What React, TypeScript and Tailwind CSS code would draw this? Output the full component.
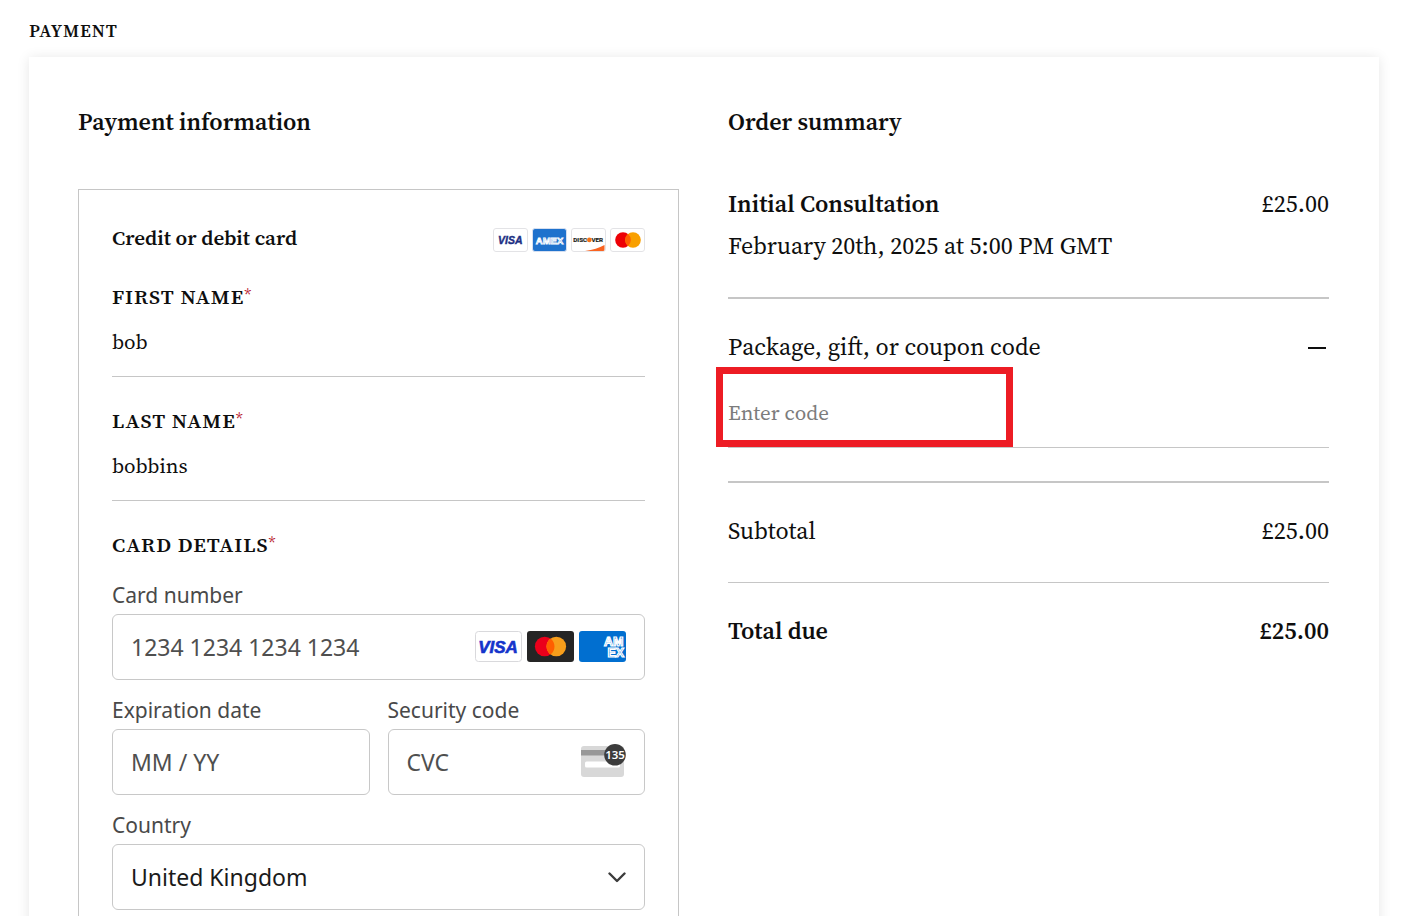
import React, { useState } from "react";

const serif =
  "font-['Source_Serif_4','Source_Serif_Pro','Noto_Serif','Liberation_Serif',serif]";
const sans = "font-['Segoe_UI','Noto_Sans',sans-serif]";

function Visa() {
  return (
    <svg viewBox="0 0 35 24" className="h-6 w-[35px]" role="img" aria-label="Visa">
      <rect x="0.5" y="0.5" width="34" height="23" rx="2.5" fill="#fff" stroke="#e3e3e6" />
      <text x="17.3" y="16" textAnchor="middle" fontFamily="Liberation Sans, sans-serif" fontSize="10.5" fontWeight="700" fontStyle="italic" fill="#1c2f83" stroke="#1c2f83" strokeWidth="0.4">VISA</text>
    </svg>
  );
}

function Amex() {
  return (
    <svg viewBox="0 0 35 24" className="h-6 w-[35px]" role="img" aria-label="American Express">
      <rect x="0.5" y="0.5" width="34" height="23" rx="2.5" fill="#1f72cd" stroke="#d5dff0" />
      <text x="17.5" y="15.5" textAnchor="middle" fontFamily="Liberation Sans, sans-serif" fontSize="9.5" fontWeight="700" fill="#5f9cdf" stroke="#fff" strokeWidth="0.8">AMEX</text>
    </svg>
  );
}

function Discover() {
  return (
    <svg viewBox="0 0 35 24" className="h-6 w-[35px]" role="img" aria-label="Discover">
      <rect x="0.5" y="0.5" width="34" height="23" rx="2.5" fill="#fff" stroke="#e3e3e6" />
      <path d="M14 23C22 22 28 20 33.500 17V21.500Q33.500 23 32 23Z" fill="#f96321" />
      <text x="2.300" y="14" fontFamily="Roboto, sans-serif" fontSize="6.200" fontWeight="700" fill="#231f20" stroke="#231f20" strokeWidth="0.2">DISC</text>
      <circle cx="18.300" cy="11.900" r="2.300" fill="#f47216" />
      <text x="20.500" y="14" fontFamily="Roboto, sans-serif" fontSize="6.200" fontWeight="700" fill="#231f20" stroke="#231f20" strokeWidth="0.2">VER</text>
    </svg>
  );
}

function Mastercard() {
  return (
    <svg viewBox="0 0 35 24" className="h-6 w-[35px]" role="img" aria-label="Mastercard">
      <rect x="0.5" y="0.5" width="34" height="23" rx="2.5" fill="#fff" stroke="#e3e3e6" />
      <circle cx="13" cy="12" r="7.8" fill="#ed0006" />
      <circle cx="23" cy="12" r="7.8" fill="#f9a000" />
      <path d="M18 6a7.800 7.800 0 0 1 0 12a7.800 7.800 0 0 1 0-12Z" fill="#ff5e00" />
    </svg>
  );
}

function FieldBrands() {
  return (
    <div className="pointer-events-none flex shrink-0 gap-1">
      <svg viewBox="0 0 48 32" className="h-8 w-12" role="img" aria-label="Visa">
        <rect x="0.5" y="0.5" width="46" height="30" rx="3" fill="#fff" stroke="#d9d9dc" />
        <text x="23" y="22" textAnchor="middle" fontFamily="Liberation Sans, sans-serif" fontSize="17" fontWeight="700" fontStyle="italic" fill="#1434cb" stroke="#1434cb" strokeWidth="0.6">VISA</text>
      </svg>
      <svg viewBox="0 0 48 32" className="h-8 w-12" role="img" aria-label="Mastercard">
        <rect width="47" height="31" rx="3" fill="#252525" />
        <circle cx="17.700" cy="15.500" r="9.800" fill="#eb001b" />
        <circle cx="29.300" cy="15.500" r="9.800" fill="#f79e1b" />
        <path d="M23.500 7.600a9.800 9.800 0 0 1 0 15.800a9.800 9.800 0 0 1 0-15.800Z" fill="#ff5f00" />
      </svg>
      <svg viewBox="0 0 48 32" className="h-8 w-12" role="img" aria-label="American Express">
        <defs>
          <clipPath id="amexCard">
            <rect width="47" height="31" rx="3" />
          </clipPath>
        </defs>
        <g clipPath="url(#amexCard)">
          <rect width="47" height="31" fill="#016fd0" />
          <text fontFamily="Liberation Sans, sans-serif" fontSize="12.500" fontWeight="700" fill="#016fd0" stroke="#fff" strokeWidth="1.200">
            <tspan x="25" y="14.500">AM</tspan>
            <tspan x="28.500" y="25.500">EX</tspan>
          </text>
        </g>
      </svg>
    </div>
  );
}

function CvcIcon() {
  return (
    <svg viewBox="0 0 46 36" className="pointer-events-none h-9 w-[46px] shrink-0" aria-hidden="true">
      <rect y="2" width="43" height="31" rx="3" fill="#d8d8d8" />
      <rect y="6" width="43" height="5.500" fill="#979797" />
      <rect x="4" y="17.500" width="35" height="6" rx="1.500" fill="#fff" />
      <circle cx="34" cy="10.800" r="10.800" fill="#3c3c3c" />
      <text x="34" y="15" textAnchor="middle" fontFamily="Noto Sans, sans-serif" fontSize="11.500" fontWeight="600" fill="#fff">135</text>
    </svg>
  );
}

function Required() {
  return <sup className="-top-1 text-base leading-none font-normal text-[#b8152b]">*</sup>;
}

function UnderlineField({ id, label, initial }: { id: string; label: string; initial: string }) {
  const [value, setValue] = useState(initial);
  return (
    <div className="mt-[30px]">
      <label htmlFor={id} className="block h-7 text-[21px] leading-7 font-semibold tracking-wider uppercase">
        {label}
        <Required />
      </label>
      <input
        id={id}
        value={value}
        onChange={(e) => setValue(e.target.value)}
        className="block h-[66px] w-full border-b border-[#c6c6c6] bg-transparent pb-1 text-[21px] outline-none"
      />
    </div>
  );
}

function BoxField({ id, label, placeholder, children }: { id: string; label: string; placeholder: string; children: React.ReactNode }) {
  return (
    <div className="min-w-0 flex-1">
      <label htmlFor={id} className="mb-[5px] block text-[21px] leading-7 text-[#494949]">{label}</label>
      <div className="flex h-[66px] items-center rounded-md border border-[#c8c8c8] pr-[17px]">
        <input
          id={id}
          placeholder={placeholder}
          className="h-full min-w-0 flex-1 bg-transparent pl-[18px] text-[23px] outline-none placeholder:text-[#4f4f4f]"
        />
        {children}
      </div>
    </div>
  );
}

export default function App() {
  const [open, setOpen] = useState(true);
  return (
    <main className={`${serif} min-h-screen bg-white pt-[17px] pr-[23px] pb-8 pl-[29px] text-[#0e0e0e]`}>
      <h1 className="text-lg leading-7 font-semibold tracking-wider uppercase">Payment</h1>
      <div className="mt-3 grid grid-cols-2 gap-[49px] bg-white pt-[49px] pr-[50px] pb-12 pl-[49px] shadow-[0_1px_12px_rgba(0,0,0,0.1)]">
        <section>
          <h2 className="mb-[51px] text-2xl leading-8 font-semibold">Payment information</h2>
          <form className="border border-[#c6c6c6] px-[33px] pt-[35px] pb-8">
            <div className="flex h-[27px] items-end justify-between">
              <h3 className="self-start text-[21px] leading-[26px] font-semibold">Credit or debit card</h3>
              <div className="flex gap-1">
                <Visa />
                <Amex />
                <Discover />
                <Mastercard />
              </div>
            </div>
            <div className="pt-px">
              <UnderlineField id="first-name" label="First name" initial="bob" />
              <UnderlineField id="last-name" label="Last name" initial="bobbins" />
            </div>
            <h4 className="mt-[30px] h-7 text-[21px] leading-7 font-semibold tracking-wider uppercase">
              Card details
              <Required />
            </h4>
            <div className={`${sans} mt-[22px] flex flex-col gap-4`}>
              <BoxField id="card-number" label="Card number" placeholder="1234 1234 1234 1234">
                <FieldBrands />
              </BoxField>
              <div className="flex gap-[18px]">
                <BoxField id="expiry" label="Expiration date" placeholder="MM / YY">{null}</BoxField>
                <BoxField id="cvc" label="Security code" placeholder="CVC">
                  <CvcIcon />
                </BoxField>
              </div>
              <div>
                <label htmlFor="country" className="mb-[5px] block text-[21px] leading-7 text-[#494949]">Country</label>
                <div className="grid items-center">
                  <select
                    id="country"
                    className="col-start-1 row-start-1 h-[66px] w-full appearance-none rounded-md border border-[#c8c8c8] bg-white px-[18px] text-[23px] text-[#1a1a1a] outline-none"
                  >
                    <option>United Kingdom</option>
                    <option>Ireland</option>
                  </select>
                  <svg viewBox="0 0 18 12" className="pointer-events-none col-start-1 row-start-1 mr-[19px] h-3 w-[18px] justify-self-end" fill="none" stroke="#3c3c3c" strokeWidth="2.4" strokeLinecap="round" strokeLinejoin="round" aria-hidden="true">
                    <path d="M1.500 2.500L9 10L16.500 2.500" />
                  </svg>
                </div>
              </div>
            </div>
          </form>
        </section>
        <section className="text-2xl leading-[42px]">
          <h2 className="mb-[45px] text-2xl leading-8 font-semibold">Order summary</h2>
          <div className="flex justify-between">
            <h3 className="font-semibold">Initial Consultation</h3>
            <span>£25.00</span>
          </div>
          <p>February 20th, 2025 at 5:00 PM GMT</p>
          <div className="mt-[30px] border-y-2 border-[#c6c6c6] pt-[27px] pb-[33px]">
            <button type="button" aria-expanded={open} onClick={() => setOpen(!open)} className="flex w-full items-center justify-between text-left">
              <span>Package, gift, or coupon code</span>
              <svg viewBox="0 0 18 18" className="mr-[3px] h-[18px] w-[18px]" aria-hidden="true">
                <path d={open ? "M0 10H18" : "M0 10H18M9 1V18"} stroke="#0e0e0e" strokeWidth="2" />
              </svg>
            </button>
            {open && (
              <div className="relative pt-[11px]">
                <input
                  aria-label="Enter code"
                  placeholder="Enter code"
                  className="block h-[69px] w-full border-b border-[#c6c6c6] bg-transparent pb-[2px] text-[21px] outline-none placeholder:text-[#7c7c7c]"
                />
                <div className="pointer-events-none absolute -top-px -left-3 h-20 w-[297px] border-[7px] border-[#ed1c24]" />
              </div>
            )}
          </div>
          <div className="flex justify-between border-b border-[#c6c6c6] pt-[27px] pb-[30px]">
            <span>Subtotal</span>
            <span>£25.00</span>
          </div>
          <div className="flex justify-between pt-[27px] font-semibold">
            <span>Total due</span>
            <span>£25.00</span>
          </div>
        </section>
      </div>
    </main>
  );
}
